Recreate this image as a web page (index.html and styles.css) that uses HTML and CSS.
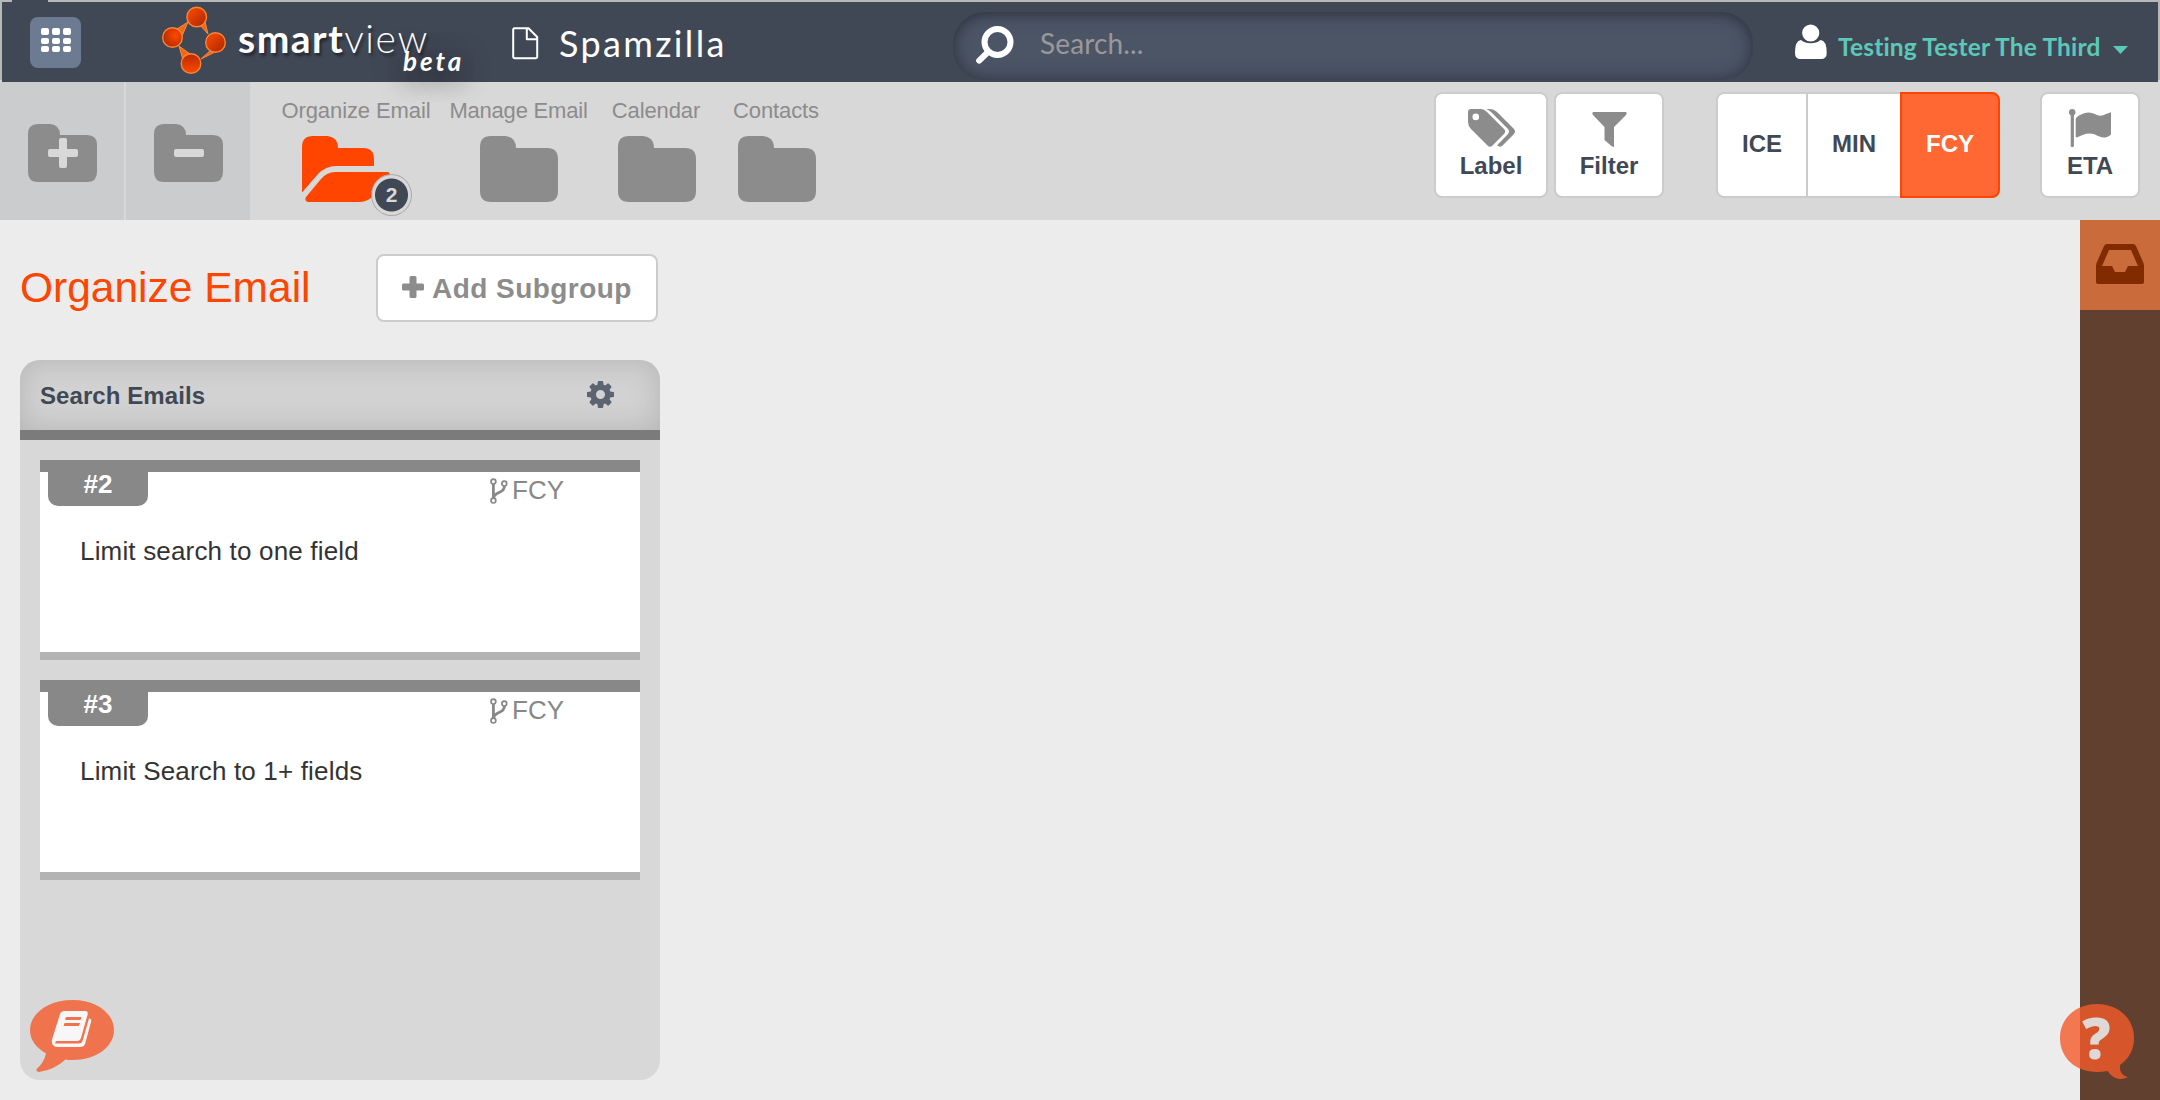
FILE: index.html
```
<!DOCTYPE html>
<html lang="en">
<head>
<meta charset="utf-8">
<title>Spamzilla – smartview</title>
<link rel="stylesheet" href="styles.css">
</head>
<body>
<div class="frame">
<header class="topbar">
  <button class="apps" aria-label="Apps"><i></i><i></i><i></i><i></i><i></i><i></i><i></i><i></i><i></i></button>
  <div class="brand">
    <svg class="brand-mark" width="66" height="70" viewBox="160 5 66 70">
      <defs>
        <linearGradient id="ember" x1="0" y1="0" x2="0" y2="1"><stop offset="0" stop-color="#b92a00"/><stop offset="1" stop-color="#fc4b00"/></linearGradient>
        <linearGradient id="emberDown" x1="0" y1="0" x2="1" y2="1"><stop offset="0.300" stop-color="#e84200"/><stop offset="1" stop-color="#a82400"/></linearGradient>
        <radialGradient id="emberLeft" cx=".65" cy=".4" r=".7"><stop offset="0" stop-color="#ff4a00"/><stop offset="1" stop-color="#b02800"/></radialGradient>
      </defs>
      <g fill="#f0681c" stroke="#fb8a34" stroke-width="1">
        <path d="M177 29L188 22L182 36Z"/><path d="M200 25L208 34L205 22Z"/><path d="M211 50L201 59L215 52Z"/><path d="M179 46L183 60L190 54Z"/>
      </g>
      <g stroke="#fb8434" stroke-width="1.400">
        <circle cx="196.700" cy="17" r="9.800" fill="url(#emberDown)"/>
        <circle cx="172.500" cy="37.500" r="9.800" fill="url(#emberLeft)"/>
        <circle cx="215.500" cy="42.500" r="9.800" fill="url(#emberDown)"/>
        <circle cx="191" cy="63.500" r="9.800" fill="url(#ember)"/>
      </g>
    </svg>
    <span class="wordmark"><b>smart</b>view</span>
    <em class="beta">beta</em>
  </div>
  <div class="project">
    <svg width="27" height="33" viewBox="0 0 27 33" fill="none" stroke="#fff" stroke-width="2" stroke-linejoin="round"><path d="M2.500 1.200H16.500L25.200 10V29.500Q25.200 31.300 23.500 31.300H2.800Q1.200 31.300 1.200 29.500V2.800Q1.200 1.200 2.500 1.200ZM14.800 1.500V12.300H25"/></svg>
    <span class="project-name">Spamzilla</span>
  </div>
  <label class="search">
    <svg width="38" height="38" viewBox="0 0 38 38" fill="none" stroke="#fff" stroke-width="6"><circle cx="21.500" cy="16" r="13"/><path d="M12 26L3.200 34.600" stroke-linecap="round"/></svg>
    <span>Search...</span>
  </label>
  <div class="user">
    <svg width="32" height="35" viewBox="0 0 32 35" fill="#fff"><circle cx="15.700" cy="9" r="8.600"/><path d="M6 16Q0 16.500 0 29Q0 35 5.500 35H26Q31.700 35 31.700 29Q31.700 16.500 25.500 16Q21.500 19.300 15.700 19.300T6 16Z"/></svg>
    <span class="user-name">Testing Tester The Third</span>
    <svg class="caret" width="15" height="8" viewBox="0 0 15 8"><path d="M0 0H15L7.500 8Z" fill="#5bc8b8"/></svg>
  </div>
</header>
</div>

<nav class="toolbar">
  <button class="folder-action" aria-label="Add folder"><svg width="69" height="58" viewBox="0 0 69 58"><path class="g" d="M10 0H22Q32 1 32 11H59Q69 11 69 21V48Q69 58 59 58H10Q0 58 0 48V10Q0 0 10 0Z"/><path fill="#d8d8d8" d="M33 14h4q2 0 2 2v9h9q2 0 2 2v4q0 2-2 2h-9v9q0 2-2 2h-4q-2 0-2-2v-9h-9q-2 0-2-2v-4q0-2 2-2h9v-9q0-2 2-2z"/></svg></button>
  <button class="folder-action" aria-label="Remove folder"><svg width="69" height="58" viewBox="0 0 69 58"><path class="g" d="M10 0H22Q32 1 32 11H59Q69 11 69 21V48Q69 58 59 58H10Q0 58 0 48V10Q0 0 10 0Z"/><rect x="20" y="25" width="30" height="8" rx="2" fill="#d8d8d8"/></svg></button>
  <ul class="tabs">
    <li class="tab tab-open"><span>Organize Email</span>
      <div class="open-folder"><svg width="88" height="66" viewBox="0 0 88 66" fill="#ff4500"><path d="M11 0H25Q36 1 36 12H61Q72 12 72 23V30H34Q24 30 16 38L0 56.500V11Q0 0 11 0Z"/><path d="M33 36H86Q89 37 87 40L72 59Q66 66 58 66H6Q2 65 4 61L19 43Q25 36 33 36Z"/></svg><b class="count">2</b></div>
    </li>
    <li class="tab tab-manage"><span>Manage Email</span><svg width="78" height="66" viewBox="0 0 78 66"><path class="g" d="M11 0H25Q36 1 36 12H67Q78 12 78 23V55Q78 66 67 66H11Q0 66 0 55V11Q0 0 11 0Z"/></svg></li>
    <li class="tab"><span>Calendar</span><svg width="78" height="66" viewBox="0 0 78 66"><path class="g" d="M11 0H25Q36 1 36 12H67Q78 12 78 23V55Q78 66 67 66H11Q0 66 0 55V11Q0 0 11 0Z"/></svg></li>
    <li class="tab"><span>Contacts</span><svg width="78" height="66" viewBox="0 0 78 66"><path class="g" d="M11 0H25Q36 1 36 12H67Q78 12 78 23V55Q78 66 67 66H11Q0 66 0 55V11Q0 0 11 0Z"/></svg></li>
  </ul>
  <div class="tools">
    <button class="tool label"><svg width="47" height="38" viewBox="0 0 47 38"><path class="g" fill-rule="evenodd" d="M3 0H13Q16 0 19 3L36 20Q38.500 22.500 36 25L24.500 36.500Q22 39 19.500 36.500L3 20Q0 17 0 13V3Q0 0 3 0ZM7.800 4.600A3.300 3.300 0 1 0 7.800 11.200A3.300 3.300 0 1 0 7.800 4.600Z"/><path class="g" d="M18 0H22Q26 0 29 3L46 20Q48 22.500 46 25L34 37Q32 38.500 29 36.500L40 25Q42 22.500 40 20L23 3Q21 1 18 0Z"/></svg>Label</button>
    <button class="tool filter"><svg width="35" height="35" viewBox="0 0 35 35"><path class="g" d="M1 0H34Q35.500 1 34 3L22 15V35L20 34.500L12.500 28V15L1 3Q-.5 1 1 0Z"/></svg>Filter</button>
    <div class="segments">
      <button class="seg ice">ICE</button><button class="seg min">MIN</button><button class="seg fcy">FCY</button>
    </div>
    <button class="tool eta"><svg width="43" height="38" viewBox="0 0 43 38"><g class="g"><circle cx="3.200" cy="3.200" r="3.200"/><rect x="1.700" y="4" width="3.200" height="34" rx="1"/><path d="M6.700 10Q7 8 10 6.500C18 2 22 3 28 6Q32 8 37 5L42 3.200V25Q42 26 40 27C35 30 31 28 26 25.500C20 23 14 25 8 28.500L6.700 28Z"/></g></svg>ETA</button>
  </div>
</nav>

<main class="workspace">
  <section class="board">
    <div class="board-head">
      <h1>Organize Email</h1>
      <button class="add"><svg width="22" height="22" viewBox="0 0 22 22"><path class="g" d="M9 0h4q1.500 0 1.500 1.500v6h6q1.500 0 1.500 1.500v4q0 1.500-1.500 1.500h-6v6q0 1.500-1.500 1.500h-4q-1.500 0-1.500-1.500v-6h-6q-1.500 0-1.500-1.500v-4q0-1.500 1.500-1.500h6v-6q0-1.500 1.500-1.500z"/></svg><span>Add Subgroup</span></button>
    </div>
    <section class="column">
      <header class="column-head"><h2>Search Emails</h2>
        <svg width="27" height="27" viewBox="128 128 1536 1536"><path fill="#5d6471" d="M1152 896q0-106-75-181t-181-75-181 75-75 181 75 181 181 75 181-75 75-181zm512-109v222q0 12-8 23t-20 13l-185 28q-19 54-39 91 35 50 107 138 10 12 10 25t-9 23q-27 37-99 108t-94 71q-12 0-26-9l-138-108q-44 23-91 38-16 136-29 186-7 28-36 28h-222q-14 0-24.500-8.500t-11.500-21.500l-28-184q-49-16-90-37l-141 107q-10 9-25 9-14 0-25-11-126-114-165-168-7-10-7-23 0-12 8-23 15-21 51-66.500t54-70.500q-27-50-41-99l-183-27q-13-2-21-12.500t-8-23.500v-222q0-12 8-23t19-13l186-28q14-46 39-92-40-57-107-138-10-12-10-24 0-10 9-23 26-36 98.500-107.500t94.500-71.500q13 0 26 10l138 107q44-23 91-38 16-136 29-186 7-28 36-28h222q14 0 24.500 8.500t11.500 21.500l28 184q49 16 90 37l142-107q9-9 24-9 13 0 25 10 129 119 165 170 7 8 7 22 0 12-8 23-15 21-51 66.500t-54 70.500q26 50 41 98l183 28q13 2 21 12.500t8 23.500z"/></svg>
      </header>
      <article class="card">
        <div class="card-head"><b class="tag">#2</b><span class="kind"><svg width="18" height="26" viewBox="0 0 18 26" fill="none" stroke="#888" stroke-width="1.700"><circle cx="3.400" cy="3.600" r="2.400"/><circle cx="14.300" cy="5.600" r="2.400"/><circle cx="3.400" cy="22.600" r="2.400"/><path d="M3.400 6V20M14.500 8C14.500 16 4.500 13 3.700 20" stroke-width="2.800"/></svg>FCY</span></div>
        <p>Limit search to one field</p>
      </article>
      <article class="card">
        <div class="card-head"><b class="tag">#3</b><span class="kind"><svg width="18" height="26" viewBox="0 0 18 26" fill="none" stroke="#888" stroke-width="1.700"><circle cx="3.400" cy="3.600" r="2.400"/><circle cx="14.300" cy="5.600" r="2.400"/><circle cx="3.400" cy="22.600" r="2.400"/><path d="M3.400 6V20M14.500 8C14.500 16 4.500 13 3.700 20" stroke-width="2.800"/></svg>FCY</span></div>
        <p>Limit Search to 1+ fields</p>
      </article>
    </section>
  </section>
  <aside class="dock">
    <button class="inbox" aria-label="Inbox"><svg width="48" height="40" viewBox="0 0 48 40"><path fill="#832b00" fill-rule="evenodd" d="M11 0H37Q39 0 40 2L47 18Q48 20 48 22V38Q48 40 46 40H2Q0 40 0 38V22Q0 20 1 18L8 2Q9 0 11 0ZM13 6L6 22H16L19 28H29L32 22H42L35 6Z"/></svg></button>
  </aside>
</main>

<button class="bubble guide" aria-label="Guide"><svg width="86" height="73" viewBox="0 0 86 73"><path fill="#f55b2a" d="M42.500 0C66 0 84 13 84 30S66 60 42.500 60Q39 60 35.500 59.500Q24 70 9 72Q6 72 6.500 69Q14 63 16 53.500Q0 44 0 30C0 13 19 0 42.500 0Z"/><path fill="#fff" fill-rule="evenodd" d="M35 11H55Q58.500 11 57.500 15L51 38Q50 41 47 41H27Q24.500 41.500 25.500 43.500H49Q51.500 43.500 52.500 41L59 18.500Q62 18 61 22L55 44Q54 47 50 47H27Q20 46 22.500 38L30 14Q31 11 35 11ZM36 17L35 20H50.500L51.500 17ZM34.500 23L33.500 26H49L50 23Z"/></svg></button>
<button class="bubble help" aria-label="Help"><svg width="74" height="76" viewBox="0 0 74 76"><path fill="#f55b2a" d="M37 0C58 0 74 14 74 34Q74 51 60 61Q59 71 68 73Q56 79 47.500 67Q43 68 37 68C16 68 0 54 0 34C0 14 16 0 37 0Z"/></svg><b>?</b></button>
</body>
</html>
```
FILE: styles.css
```
* { box-sizing: border-box; }
body { margin: 0; height: 1100px; overflow: hidden; display: flex; flex-direction: column; background: #ececec; font-family: "Liberation Sans", Arial, sans-serif; position: relative; }
button { font: inherit; border: 0; padding: 0; background: none; display: block; }
svg { display: block; flex: none; overflow: visible; }
ul, h1, h2, p { margin: 0; padding: 0; list-style: none; }
.g { fill: #8c8c8c; }

/* top bar */
.frame { height: 82px; padding: 2px 2px 0; background: linear-gradient(90deg, transparent 12px, #414855 12px 48px, transparent 48px) 0 0 / 100% 2px no-repeat, linear-gradient(#b8b8b8 80px, #d8d8d8 80px); flex: none; }
.topbar { height: 80px; background: #414855; display: flex; padding-left: 28px; font-family: Lato, sans-serif; color: #fff; }
.apps { width: 51px; height: 51px; margin-top: 15px; padding: 11px 10px 16px 11px; border-radius: 8px; background: #6c7a92; display: grid; grid-template-columns: repeat(3, 8px); grid-template-rows: 7px 6px 6px; gap: 2.500px 3px; }
.apps i { background: #fff; border-radius: 2px; }
.brand { position: relative; width: 382px; padding-left: 79px; display: flex; }
.brand-mark { margin-top: 3px; }
.wordmark { margin: 8px 0 0 12px; font-size: 39px; line-height: 56px; font-weight: 300; letter-spacing: 1.600px; text-shadow: 2px 3px 3px rgba(0,0,0,.45); }
.wordmark b { font-weight: 700; letter-spacing: 1.500px; }
.beta { position: absolute; left: 322px; top: 43px; font-size: 26px; line-height: 32px; font-weight: 700; letter-spacing: 3px; text-shadow: 0 4px 28px rgba(0,0,0,.5), 4px 12px 24px rgba(0,0,0,.3); }
.project { width: 490px; padding-left: 49px; display: flex; }
.project svg { margin-top: 25px; }
.project-name { margin: 17px 0 0 20px; font-size: 36px; line-height: 48px; letter-spacing: 2.350px; }
.search { width: 800px; height: 68px; margin-top: 10px; padding-left: 23px; display: flex; border-radius: 32px; background: #4c5566; box-shadow: inset 0 0 18px rgba(35,40,50,.6), inset 0 3px 8px rgba(45,50,62,.5); }
.search svg { margin-top: 14px; }
.search span { margin: 13px 0 0 26px; font-size: 28px; line-height: 36px; letter-spacing: .15px; color: #999; }
.user { display: flex; padding-left: 42px; color: #5bc8b8; }
.user svg { margin-top: 22px; }
.user-name { margin: 30px 0 0 11px; font-size: 24.500px; line-height: 30px; font-weight: 700; letter-spacing: .18px; white-space: nowrap; }
.user .caret { margin: 44px 0 0 12px; }

/* folders toolbar */
.toolbar { height: 138px; flex: none; display: flex; background: #d8d8d8; }
.folder-action { width: 124px; height: 138px; margin-right: 2px; padding: 42px 0 0 28px; background: #cbccce; }
.folder-action + .folder-action { margin-right: 0; }
.folder-action svg { margin-bottom: 38px; }
.tabs { display: flex; padding-left: 21px; font-size: 22px; color: #8c8c8c; }
.tab { width: 120px; padding-top: 16px; display: flex; flex-direction: column; align-items: center; white-space: nowrap; }
.tab span { line-height: 26px; margin: 0 2px 12px 0; letter-spacing: -.1px; }
.tab-open { width: 170px; }
.tab-open span { margin-right: 0; }
.tab-manage { width: 156px; }
.tab-manage span { letter-spacing: -.2px; margin-right: 1px; }
.open-folder { position: relative; width: 108px; }
.count { position: absolute; left: 69px; top: 38px; width: 41px; height: 42px; border-radius: 50%; border: 1px solid #aaa; background: radial-gradient(circle, #414855 16px, #d8d8d8 17px); color: #d8d8d8; font-size: 21px; line-height: 40px; text-align: center; }
.tools { margin: 10px 20px 0 auto; height: 106px; display: flex; font-size: 24px; font-weight: 700; color: #414855; }
.tool, .segments { height: 106px; border: 2px solid #ccc; border-radius: 8px; background: #fff; color: #414855; }
.tool { display: flex; flex-direction: column; align-items: center; padding-top: 15px; line-height: 28px; font-weight: 700; }
.tool svg { margin-bottom: 5px; }
.label { width: 114px; margin-right: 6px; }
.filter { width: 110px; margin-right: 52px; padding-top: 18px; }
.eta { width: 100px; }
.segments { width: 284px; margin-right: 40px; display: flex; }
.seg { height: 102px; padding-bottom: 2px; font-weight: 700; color: #414855; }
.ice { width: 90px; border-right: 2px solid #ccc; }
.min { width: 92px; }
.fcy { width: 100px; height: 106px; margin: -2px -2px -2px 0; border: 2px solid #ff4500; border-radius: 0 8px 8px 0; background: #ff6833; color: #fff; }

/* board */
.workspace { flex: 1; display: flex; min-height: 0; }
.board { flex: 1; padding: 34px 20px 20px; }
.board-head { width: 640px; display: flex; justify-content: space-between; padding-right: 2px; height: 106px; }
h1 { font-size: 42.500px; line-height: 48px; margin-top: 10px; font-weight: 400; color: #ff4500; white-space: nowrap; }
.add { width: 282px; height: 68px; border: 2px solid #ccc; border-radius: 8px; background: #fff; display: flex; align-items: center; padding-left: 24px; gap: 8px; font-size: 28px; font-weight: 700; letter-spacing: .45px; color: #8c8c8c; white-space: nowrap; }
.add svg { margin-bottom: 2px; }
.add span { padding-top: 1px; }
.column { width: 640px; height: 720px; border-radius: 20px; background: #d8d8d8; overflow: hidden; }
.column-head { height: 80px; border-bottom: 10px solid #7b7b7b; background: #d2d2d2; box-shadow: inset 0 0 30px rgba(0,0,0,.15); display: flex; justify-content: space-between; padding: 20px 46px 0 20px; }
.column-head svg { margin-top: 1px; }
h2 { font-size: 24px; line-height: 32px; letter-spacing: .08px; color: #414855; }
.card { width: 600px; height: 200px; margin: 20px 20px 0; background: #fff; border-top: 12px solid #888; border-bottom: 8px solid #b3b3b3; font-size: 26px; }
.card-head { display: flex; padding-left: 8px; height: 34px; }
.tag { width: 100px; height: 34px; background: #888; border-radius: 0 0 10px 10px; color: #fff; text-align: center; line-height: 25px; }
.kind { display: flex; margin-left: 342px; gap: 4px; color: #888; line-height: 37px; }
.kind svg { margin-top: 6px; }
.card p { padding: 27px 0 0 40px; line-height: 36px; color: #333; letter-spacing: .17px; }
.dock { width: 80px; background: #614030; }
.inbox { width: 80px; height: 90px; padding: 0 16px; background: #c96b3b; }
.inbox svg { margin-top: -2px; }

/* floating helpers */
.bubble { position: absolute; opacity: .8; }
.guide { left: 30px; top: 1000px; }
.help { left: 2060px; top: 1004px; }
.help b { position: absolute; left: 0; top: -1px; width: 73px; text-align: center; font: 800 56px/68px "Open Sans", sans-serif; color: #fff; }
```
